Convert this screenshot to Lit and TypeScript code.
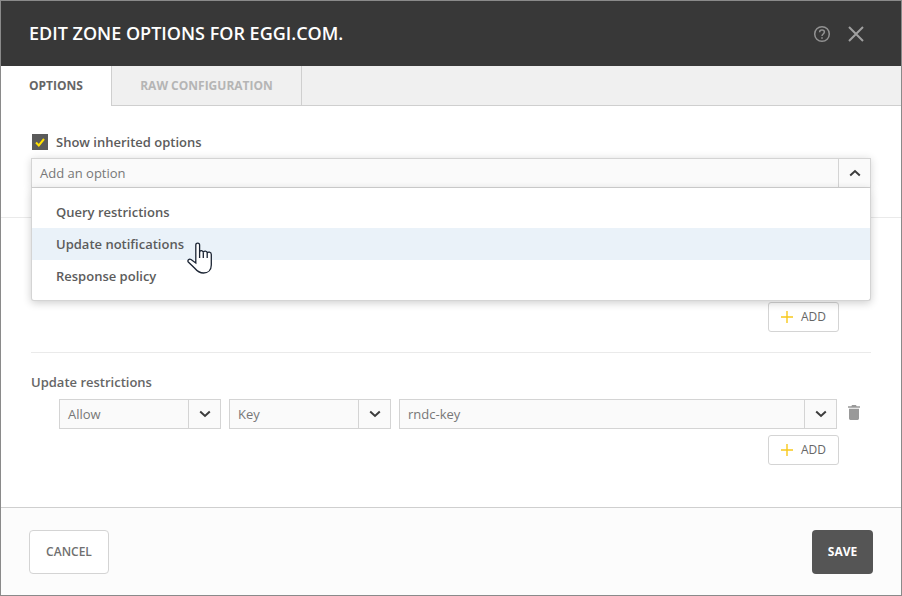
import { css, html, LitElement } from "lit";
import { customElement } from "lit/decorators.js";

const chevronDown = html`<svg width="12" height="8" viewBox="0 0 12 8"><path d="M1.2 1.5 6 6 10.8 1.5" fill="none" stroke="#3c3c3c" stroke-width="2"/></svg>`;
const chevronUp = html`<svg width="12" height="8" viewBox="0 0 12 8"><path d="M1.2 6.5 6 2 10.8 6.5" fill="none" stroke="#3c3c3c" stroke-width="2"/></svg>`;

@customElement("app-root")
export class AppRoot extends LitElement {
  static override styles = css`
    :host {
      display: block;
      width: 902px;
      height: 596px;
      font-family: "Open Sans", sans-serif;
      color: #555;
    }
    .dialog {
      box-sizing: border-box;
      width: 902px;
      height: 596px;
      border: 1px solid #8a8a8a;
      display: flex;
      flex-direction: column;
      position: relative;
      overflow: hidden;
      background: #fff;
    }
    .header {
      height: 65px;
      flex: none;
      background: #383838;
      display: flex;
      align-items: center;
      padding: 0 37px 0 28px;
      gap: 17px;
    }
    .title {
      flex: 1;
      font-size: 18px;
      font-weight: 600;
      color: #fff;
      text-transform: uppercase;
      padding-bottom: 2px;
    }
    .header svg {
      display: block;
    }
    .tabs {
      height: 40px;
      flex: none;
      box-sizing: border-box;
      display: flex;
      background: #f0f0f0;
      border-bottom: 1px solid #cfcfcf;
    }
    .tab {
      box-sizing: border-box;
      height: 39px;
      display: flex;
      align-items: center;
      font-size: 12px;
      font-weight: 700;
      text-transform: uppercase;
      border-right: 1px solid #cfcfcf;
    }
    .tab.active {
      width: 111px;
      height: 40px;
      padding: 0 0 2px 28px;
      background: #fff;
      color: #666;
    }
    .tab.raw {
      width: 190px;
      justify-content: center;
      color: #b5b5b5;
    }
    .body {
      flex: 1;
      min-height: 0;
    }
    .top {
      padding: 28px 30px 0;
    }
    .check-row {
      display: flex;
      align-items: center;
      gap: 8px;
      height: 16px;
      padding-left: 1px;
      font-size: 13px;
      font-weight: 600;
      color: #5c5c5c;
    }
    .checkbox {
      width: 16px;
      height: 16px;
      background: #5a5a5a;
      display: flex;
      align-items: center;
      justify-content: center;
    }
    .combo {
      position: relative;
      margin-top: 8px;
      box-shadow: 0 1px 8px rgba(0, 0, 0, 0.16);
    }
    .select {
      box-sizing: border-box;
      height: 30px;
      display: flex;
      background: #fafafa;
      border: 1px solid #d4d4d4;
      font-size: 13px;
      color: #777;
    }
    .select .value {
      flex: 1;
      display: flex;
      align-items: center;
      padding-left: 8px;
    }
    .select .arrow {
      width: 31px;
      flex: none;
      display: flex;
      align-items: center;
      justify-content: center;
      border-left: 1px solid #d4d4d4;
    }
    .menu {
      position: absolute;
      z-index: 2;
      left: 0;
      right: 0;
      top: 30px;
      box-sizing: border-box;
      height: 113px;
      padding: 8px 0;
      background: #fff;
      border: 1px solid #d4d4d4;
      border-top: none;
      border-radius: 0 0 3px 3px;
      box-shadow: 0 2px 8px rgba(0, 0, 0, 0.2);
    }
    .item {
      height: 32px;
      display: flex;
      align-items: center;
      padding-left: 24px;
      font-size: 13px;
      font-weight: 600;
      color: #5c5c5c;
    }
    .item.hover {
      background: #eaf2f9;
    }
    .cursor {
      position: absolute;
      z-index: 3;
      left: 186px;
      top: 241px;
    }
    .rule-full {
      height: 1px;
      margin-top: 29px;
      background: #eaeaea;
    }
    .section {
      padding: 0 30px;
    }
    .first {
      padding-top: 84px;
      padding-bottom: 20px;
    }
    .add-row {
      display: flex;
      justify-content: flex-end;
      padding-right: 32px;
    }
    .add {
      box-sizing: border-box;
      width: 71px;
      height: 30px;
      display: flex;
      align-items: center;
      justify-content: center;
      gap: 8px;
      padding-bottom: 1px;
      background: #fff;
      border: 1px solid #d4d4d4;
      border-radius: 3px;
      font-size: 12px;
      font-weight: 400;
      color: #666;
    }
    .rule {
      height: 1px;
      margin: 0 30px;
      background: #eaeaea;
    }
    .label {
      margin-top: 20px;
      height: 18px;
      line-height: 18px;
      font-size: 13px;
      font-weight: 600;
      color: #666;
    }
    .fields {
      display: flex;
      align-items: center;
      gap: 8px;
      margin-top: 8px;
      padding-left: 28px;
    }
    .fields .select.small {
      width: 162px;
    }
    .fields .select.wide {
      width: 438px;
      margin-right: 3px;
    }
    .trash {
      display: block;
      margin-top: -3px;
    }
    .section .add-row.second {
      margin-top: 6px;
    }
    .footer {
      box-sizing: border-box;
      flex: none;
      height: 88px;
      background: #fcfcfc;
      border-top: 1px solid #cfcfcf;
      display: flex;
      justify-content: space-between;
      align-items: flex-start;
      padding: 22px 28px 0;
    }
    .btn {
      box-sizing: border-box;
      height: 44px;
      display: flex;
      align-items: center;
      justify-content: center;
      padding-bottom: 2px;
      border-radius: 4px;
      font-size: 12px;
      font-weight: 600;
    }
    .cancel {
      width: 80px;
      background: #fff;
      border: 1px solid #d4d4d4;
      color: #707070;
    }
    .save {
      width: 61px;
      background: #555;
      color: #fff;
      font-weight: 700;
    }
  `;

  private plus() {
    return html`<svg width="12" height="12" viewBox="0 0 12 12"><path d="M6 0v12M0 6h12" stroke="#f8c91c" stroke-width="1.4" fill="none"/></svg>`;
  }

  private select(value: string, cls: string) {
    return html`<div class="select ${cls}">
      <div class="value">${value}</div>
      <div class="arrow">${chevronDown}</div>
    </div>`;
  }

  override render() {
    return html`
      <div class="dialog">
        <div class="header">
          <div class="title">Edit zone options for eggi.com.</div>
          <svg width="18" height="18" viewBox="0 0 18 18" fill="none" stroke="#929292" stroke-width="1.5">
            <circle cx="9" cy="9" r="7.3" />
            <path d="M6.6 7.2C6.6 5.8 7.6 5 9 5s2.4.9 2.4 2.1c0 1.9-2.4 1.9-2.4 3.9" />
            <path d="M9 12.2v1.5" />
          </svg>
          <svg width="16" height="16" viewBox="0 0 16 16" fill="none" stroke="#a0a0a0" stroke-width="2">
            <path d="M1 1l14 14M15 1 1 15" />
          </svg>
        </div>
        <div class="tabs">
          <div class="tab active">Options</div>
          <div class="tab raw">Raw configuration</div>
        </div>
        <div class="body">
          <div class="top">
            <div class="check-row">
              <div class="checkbox">
                <svg width="10" height="9" viewBox="0 0 10 9" fill="none"><path d="M1 4.500 3.800 7.400 9 1" stroke="#ffe000" stroke-width="2" /></svg>
              </div>
              Show inherited options
            </div>
            <div class="combo">
              <div class="select">
                <div class="value">Add an option</div>
                <div class="arrow">${chevronUp}</div>
              </div>
              <div class="menu">
                <div class="item">Query restrictions</div>
                <div class="item hover">Update notifications</div>
                <div class="item">Response policy</div>
              </div>
            </div>
          </div>
          <div class="rule-full"></div>
          <div class="section first">
            <div class="add-row">
              <div class="add">${this.plus()}ADD</div>
            </div>
          </div>
          <div class="rule"></div>
          <div class="section">
            <div class="label">Update restrictions</div>
            <div class="fields">
              ${this.select("Allow", "small")} ${this.select("Key", "small")} ${this.select("rndc-key", "wide")}
              <svg class="trash" width="12" height="15" viewBox="0 0 12 15" fill="#999">
                <path d="M4 0h4l.6 1.200H12v1.600H0V1.200h3.400z" />
                <path d="M1 3.800h10V13.600a1.400 1.400 0 0 1-1.400 1.400H2.400A1.400 1.400 0 0 1 1 13.600z" />
              </svg>
            </div>
            <div class="add-row second">
              <div class="add">${this.plus()}ADD</div>
            </div>
          </div>
        </div>
        <div class="footer">
          <div class="btn cancel">CANCEL</div>
          <div class="btn save">SAVE</div>
        </div>
        <svg class="cursor" width="26" height="33" viewBox="0 0 26 33" fill="#fff" stroke="#1b2433" stroke-width="1.3">
          <path d="M8.800 21V3C8.800.5 12.600.5 12.600 3V10C13 8 16 8 16.300 10.500 16.800 8.600 20 8.800 20.200 11 20.800 9.600 24.300 9.800 24.300 12.500V23C24.300 28 21 31 16.500 31 12 31 10 29 7.500 26L1.300 20C.2 18.500 2 16.500 4 17.500Z" />
          <path d="M12.600 10V16M16.300 10.500V16M20.200 11V16" fill="none" />
        </svg>
      </div>
    `;
  }
}
